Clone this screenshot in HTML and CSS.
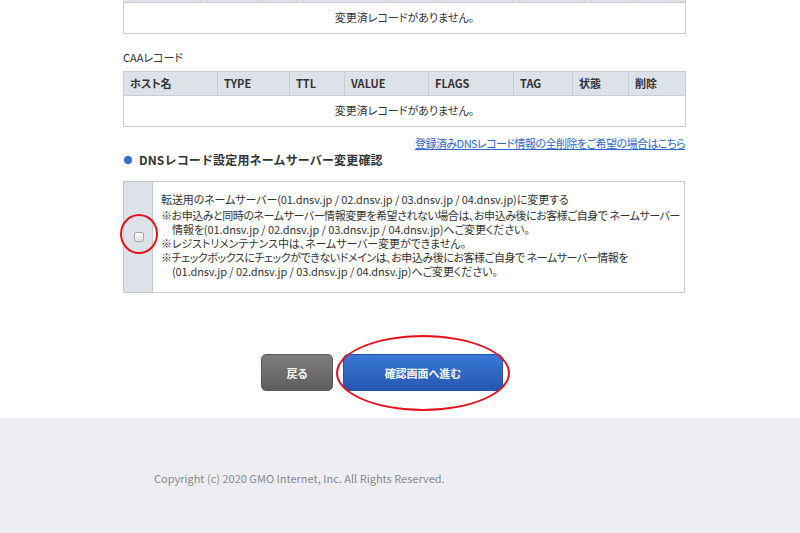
FILE: index.html
```html
<!DOCTYPE html>
<html lang="ja">
<head>
<meta charset="utf-8">
<title>DNSレコード設定</title>
<link rel="stylesheet" href="styles.css">
</head>
<body>
<div class="main">
  <table class="rec">
    <colgroup>
      <col style="width:77px"><col style="width:58px"><col style="width:45px"><col style="width:82px"><col style="width:48px"><col style="width:79px"><col style="width:79px"><col style="width:47px"><col style="width:47px">
    </colgroup>
    <tr class="head"><th></th><th></th><th></th><th></th><th></th><th></th><th></th><th></th><th></th></tr>
    <tr class="empty"><td colspan="9">変更済レコードがありません。</td></tr>
  </table>

  <p class="label">CAAレコード</p>
  <table class="rec">
    <colgroup>
      <col style="width:94px"><col style="width:72px"><col style="width:55px"><col style="width:84px"><col style="width:85px"><col style="width:59px"><col style="width:56px"><col style="width:57px">
    </colgroup>
    <tr class="head"><th>ホスト名</th><th>TYPE</th><th>TTL</th><th>VALUE</th><th>FLAGS</th><th>TAG</th><th>状態</th><th>削除</th></tr>
    <tr class="empty"><td colspan="8">変更済レコードがありません。</td></tr>
  </table>

  <div class="linkrow"><a href="#" class="dellink">登録済みDNSレコード情報の全削除をご希望の場合はこちら</a></div>

  <h2 class="heading"><span class="dot"></span>DNSレコード設定用ネームサーバー変更確認</h2>

  <div class="nsbox">
    <div class="nscheck">
      <input type="checkbox" class="cb">
      <span class="mark-circle"></span>
    </div>
    <div class="nstext">
      <p class="first">転送用のネームサーバー(01.dnsv.jp / 02.dnsv.jp / 03.dnsv.jp / 04.dnsv.jp)に変更する</p>
      <p class="tight">※お申込みと同時のネームサーバー情報変更を希望されない場合は、お申込み後にお客様ご自身で ネームサーバー</p>
      <p class="cont">情報を(01.dnsv.jp / 02.dnsv.jp / 03.dnsv.jp / 04.dnsv.jp)へご変更ください。</p>
      <p>※レジストリメンテナンス中は、ネームサーバー変更ができません。</p>
      <p class="tight">※チェックボックスにチェックができないドメインは、お申込み後にお客様ご自身で ネームサーバー情報を</p>
      <p class="cont">(01.dnsv.jp / 02.dnsv.jp / 03.dnsv.jp / 04.dnsv.jp)へご変更ください。</p>
    </div>
  </div>

  <div class="buttons">
    <button class="btn back">戻る</button>
    <button class="btn next">確認画面へ進む</button>
    <span class="mark-ellipse"></span>
  </div>
</div>

<footer class="footer">
  <p class="copy">Copyright (c) 2020 GMO Internet, Inc. All Rights Reserved.</p>
</footer>
</body>
</html>
```

FILE: styles.css
```css
html, body {
  margin: 0;
  padding: 0;
  background: #ffffff;
  font-family: "Noto Sans CJK JP", "Noto Sans", sans-serif;
  font-size: 11px;
  color: #333333;
  font-feature-settings: "palt";
  overflow: hidden;
}

.main {
  width: 562px;
  margin: -22px 0 0 123px;
}

.rec {
  width: 562px;
  border-collapse: collapse;
  table-layout: fixed;
}

.rec th, .rec td {
  border: 1px solid #c9ccd2;
  padding: 0 6px;
}

.rec .head th {
  height: 24px;
  padding-bottom: 2px;
  box-sizing: border-box;
  background: #dde1e8;
  text-align: left;
  font-weight: bold;
  font-size: 11px;
  color: #333;
}

.rec .empty td {
  height: 28px;
  padding-bottom: 2px;
  text-align: center;
  background: #fff;
}

.label {
  margin: 15px 0 6px;
  line-height: 16px;
}

.linkrow {
  margin-top: 8px;
  text-align: right;
  line-height: 16px;
}

.dellink {
  color: #2f66c9;
  text-decoration: underline;
  letter-spacing: -0.55px;
}

.heading {
  margin: 1px 0 0;
  display: flex;
  align-items: center;
  font-size: 12px;
  font-weight: bold;
  line-height: 16px;
  color: #333;
  font-feature-settings: normal;
  letter-spacing: 0.15px;
}

.dot {
  width: 8px;
  height: 8px;
  border-radius: 50%;
  background: #2f6fd8;
  margin: 0 7px 0 1px;
}

.nsbox {
  margin-top: 13px;
  display: flex;
  border: 1px solid #c6c8cc;
  height: 110px;
}

.nscheck {
  position: relative;
  flex: 0 0 28px;
  background: #dde1e8;
  border-right: 1px solid #c6c8cc;
  display: flex;
  align-items: center;
  justify-content: center;
}

.cb {
  appearance: none;
  -webkit-appearance: none;
  margin: 0 0 0 1px;
  width: 10px;
  height: 10px;
  border: 1px solid #a9a9a9;
  border-radius: 2px;
  background: linear-gradient(#fafafa, #e4e4e4);
}

.mark-circle {
  position: absolute;
  left: -4px;
  top: 32px;
  width: 34px;
  height: 36px;
  border: 2px solid #e8101a;
  border-radius: 50%;
}

.nstext {
  flex: 1 1 auto;
  min-width: 0;
  overflow: hidden;
  padding: 10px 0 0 8px;
  letter-spacing: -0.1px;
}

.nstext p {
  margin: 0;
  line-height: 14px;
  white-space: nowrap;
}

.nstext p.first {
  margin-bottom: 2px;
}

.nstext p.tight {
  letter-spacing: -0.45px;
}

.nstext p.cont {
  padding-left: 11px;
}

.buttons {
  position: relative;
  margin: 61px 0 0 138px;
  display: flex;
  gap: 10px;
}

.btn {
  height: 37px;
  border-radius: 5px;
  font-family: "Noto Sans CJK JP", sans-serif;
  font-feature-settings: "palt";
  font-size: 11px;
  font-weight: bold;
  color: #ffffff;
  cursor: pointer;
}

.back {
  width: 72px;
  border: 1px solid #5a5a5a;
  background: linear-gradient(#7d7d7d, #5e5e5e);
}

.next {
  width: 160px;
  border: 1px solid #2453a8;
  background: linear-gradient(#3a78d6, #2557b2);
}

.mark-ellipse {
  position: absolute;
  left: 75px;
  top: -19px;
  width: 170px;
  height: 72px;
  border: 2px solid #e8101a;
  border-radius: 50%;
}

.footer {
  margin-top: 27px;
  background: #eceef3;
  height: 115px;
  padding: 1px 0 0 154px;
  box-sizing: border-box;
}

.copy {
  margin: 51px 0 0;
  line-height: 16px;
  color: #8a8a8a;
  font-size: 11px;
}
```
